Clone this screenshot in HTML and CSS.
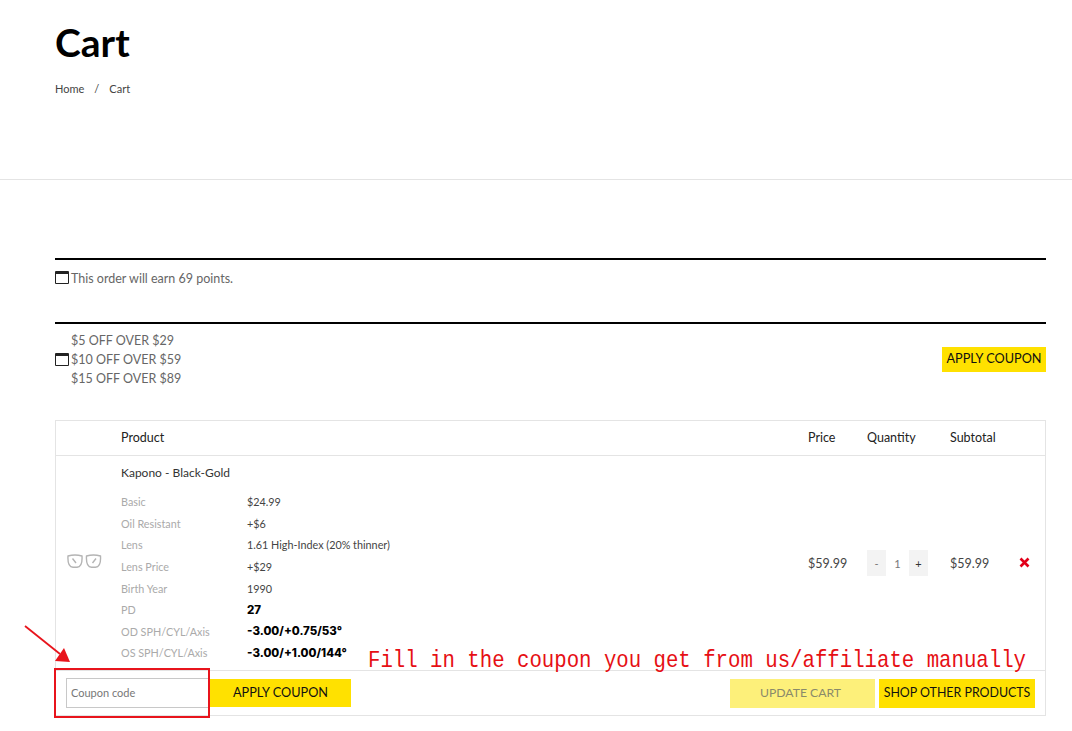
FILE: index.html
```html
<!DOCTYPE html>
<html lang="en">
<head>
<meta charset="utf-8">
<title>Cart</title>
<link rel="stylesheet" href="styles.css">
</head>
<body>
<header class="page-head">
  <h1 class="page-title">Cart</h1>
  <nav class="crumbs"><span>Home</span><span class="crumb-sep">/</span><span>Cart</span></nav>
</header>
<main class="content">
  <section class="notice notice-points">
    <span class="notice-icon"></span>
    <span>This order will earn 69 points.</span>
  </section>
  <section class="notice notice-coupons">
    <span class="notice-icon"></span>
    <div class="coupon-lines">
      <div>$5 OFF OVER $29</div>
      <div>$10 OFF OVER $59</div>
      <div>$15 OFF OVER $89</div>
    </div>
    <button class="btn btn-notice">APPLY COUPON</button>
  </section>
  <section class="cart">
    <div class="cart-row cart-head">
      <div></div>
      <div>Product</div>
      <div>Price</div>
      <div>Quantity</div>
      <div>Subtotal</div>
      <div></div>
    </div>
    <div class="cart-row cart-item">
      <div class="thumb">
        <svg width="35" height="14" viewBox="0 0 35 14" fill="none" stroke="#b4b4b4" stroke-width="1.400">
          <path d="M1 2c4-1.200 10-1.200 14 0 .3 5-.8 11-5 11.300H6C1.800 13 .7 7 1 2z"/>
          <path d="M19.500 2c4-1.200 10-1.200 14 0 .3 5-.8 11-5 11.300h-4c-4.200-.3-5.300-6.300-5-11.300z"/>
          <path d="M5.500 4.500l3.500 4.500M29 4.500l-3.500 4.500"/>
        </svg>
      </div>
      <div class="product">
        <div class="product-name">Kapono - Black-Gold</div>
        <dl class="specs">
          <dt>Basic</dt><dd>$24.99</dd>
          <dt>Oil Resistant</dt><dd>+$6</dd>
          <dt>Lens</dt><dd>1.61 High-Index (20% thinner)</dd>
          <dt>Lens Price</dt><dd>+$29</dd>
          <dt>Birth Year</dt><dd>1990</dd>
          <dt>PD</dt><dd class="strong">27</dd>
          <dt>OD SPH/CYL/Axis</dt><dd class="strong">-3.00/+0.75/53°</dd>
          <dt>OS SPH/CYL/Axis</dt><dd class="strong">-3.00/+1.00/144°</dd>
        </dl>
      </div>
      <div class="cell-mid">$59.99</div>
      <div class="cell-mid">
        <div class="qty"><span class="qty-btn qty-minus">-</span><span class="qty-val">1</span><span class="qty-btn">+</span></div>
      </div>
      <div class="cell-mid">$59.99</div>
      <div class="cell-mid cell-remove">
        <svg width="11" height="11" viewBox="0 0 11 11"><path d="M1.500 1.500l8 8M9.500 1.500l-8 8" stroke="#e2001a" stroke-width="2.600" fill="none"/></svg>
      </div>
    </div>
    <div class="cart-foot">
      <input class="coupon-input" type="text" placeholder="Coupon code">
      <button class="btn btn-apply">APPLY COUPON</button>
      <div class="foot-right">
        <button class="btn btn-update">UPDATE CART</button>
        <button class="btn btn-shop">SHOP OTHER PRODUCTS</button>
      </div>
    </div>
  </section>
</main>
<svg class="note-arrow" width="60" height="50" viewBox="0 0 60 50">
  <path d="M1 1L36 29" stroke="#e8141c" stroke-width="1.800" fill="none"/>
  <path d="M46 37L31 36L40 23z" fill="#e8141c"/>
</svg>
<div class="note-box"></div>
<div class="note-text">Fill in the coupon you get from us/affiliate manually</div>
</body>
</html>
```
FILE: styles.css
```css
* { box-sizing: border-box; }
html, body { margin: 0; padding: 0; background: #fff; }
body {
  position: relative;
  height: 731px;
  overflow: hidden;
  font-family: "Lato", "Liberation Sans", sans-serif;
  color: #333;
  font-size: 13px;
}
.page-head {
  height: 180px;
  padding: 18px 55px 0;
  border-bottom: 1px solid #e4e4e4;
}
.page-title {
  margin: 0;
  font-size: 39px;
  line-height: 48px;
  font-weight: 700;
  color: #000;
}
.crumbs {
  display: flex;
  margin-top: 15px;
  font-size: 11px;
  line-height: 16px;
  color: #444;
}
.crumb-sep { margin: 0 10px; }
.content { padding: 78px 26px 0 55px; }
.notice {
  display: flex;
  align-items: center;
  border-top: 2px solid #000;
}
.notice-icon {
  flex: none;
  width: 14px;
  height: 13px;
  margin-right: 2px;
  border: 1px solid #222;
  border-top-width: 3px;
  border-radius: 1px;
}
.notice-points {
  height: 64px;
  padding-top: 10px;
  align-items: flex-start;
  font-size: 12.500px;
  line-height: 18px;
  color: #666;
}
.notice-points .notice-icon { margin-top: 1px; }
.notice-coupons {
  height: 98px;
  padding-bottom: 30px;
  padding-top: 4px;
  font-size: 12.500px;
  line-height: 19px;
  color: #666;
}
.coupon-lines { flex: 1; }
.btn {
  border: 0;
  padding: 0 0 2px;
  font-family: inherit;
  background: #ffe100;
  color: #111;
  font-size: 12.700px;
  text-align: center;
}
.btn-notice { width: 104px; height: 25px; }
.cart {
  height: 296px;
  border: 1px solid #e4e4e4;
  display: flex;
  flex-direction: column;
}
.cart-row {
  display: grid;
  grid-template-columns: 65px 687px 59px 83px 69px 26px;
}
.cart-head {
  height: 35px;
  align-items: center;
  border-bottom: 1px solid #e4e4e4;
  padding-bottom: 2px;
  font-size: 12.500px;
  color: #222;
}
.cart-item { height: 214px; }
.thumb {
  display: flex;
  align-items: center;
  justify-content: center;
  padding: 0 9px 4px 0;
}
.product { padding-top: 8px; }
.product-name { font-size: 12px; line-height: 18px; color: #333; }
.specs {
  display: grid;
  grid-template-columns: 126px 1fr;
  grid-auto-rows: 21.600px;
  align-items: center;
  margin: 9px 0 0;
  font-size: 10.800px;
}
.specs dt { color: #aaa; }
.specs dd { margin: 0; color: #444; }
.specs .strong { font-family: "Inter", sans-serif; font-weight: 800; font-size: 11.500px; color: #000; }
.cell-mid {
  display: flex;
  align-items: center;
  font-size: 12.500px;
  color: #444;
}
.cell-remove { padding-bottom: 1px; }
.qty { display: flex; align-items: center; height: 26px; font-size: 11px; }
.qty-btn {
  width: 19px;
  height: 26px;
  background: #f3f3f3;
  display: flex;
  align-items: center;
  justify-content: center;
  color: #333;
}
.qty-minus { color: #777; }
.qty-val { width: 23px; text-align: center; color: #777; }
.cart-foot {
  flex: 1;
  display: flex;
  align-items: center;
  border-top: 1px solid #e4e4e4;
  padding: 0 10px;
}
.coupon-input {
  width: 144px;
  height: 30px;
  border: 1px solid #c8c8c8;
  padding: 0 4px 2px;
  font-family: inherit;
  font-size: 11px;
  background: #fff;
}
.coupon-input::placeholder { color: #777; opacity: 1; }
.btn-apply { width: 141px; height: 28px; }
.foot-right { margin-left: auto; display: flex; gap: 4px; }
.btn-update { width: 145px; height: 29px; padding-right: 4px; background: #fdf07a; color: #8a8a6a; font-size: 12.200px; }
.btn-shop { width: 156px; height: 29px; font-size: 12.400px; }
.note-arrow { position: absolute; left: 24px; top: 625px; }
.note-box {
  position: absolute;
  left: 54px;
  top: 668px;
  width: 156px;
  height: 50px;
  border: 2px solid #e8141c;
}
.note-text {
  position: absolute;
  left: 368px;
  top: 646px;
  font-family: "Liberation Mono", monospace;
  font-size: 24px;
  line-height: 30px;
  color: #e60f14;
  white-space: nowrap;
  transform: scaleX(.862);
  transform-origin: 0 0;
}
```
